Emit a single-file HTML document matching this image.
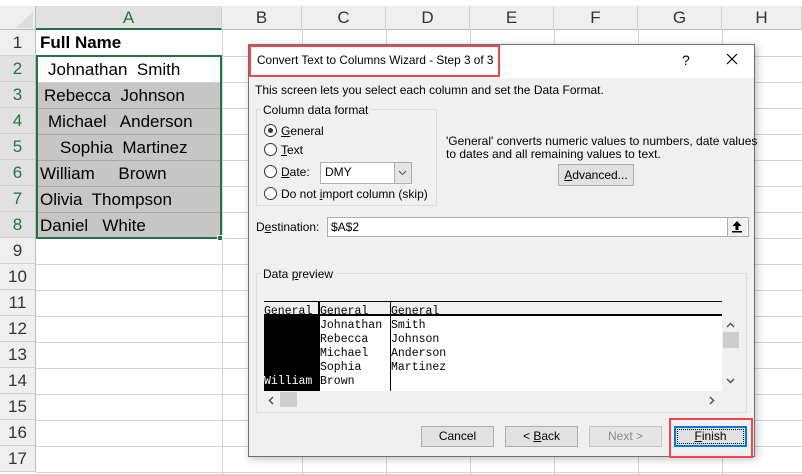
<!DOCTYPE html>
<html><head><style>
*{margin:0;padding:0;box-sizing:border-box}
body{width:802px;height:474px;overflow:hidden;background:#fff;position:relative;font-family:"Liberation Sans",sans-serif}
.a{position:absolute}
.hl{position:absolute;left:36px;width:766px;height:1px;background:#d4d4d4}
.vl{position:absolute;top:30px;width:1px;height:444px;background:#d4d4d4}
.rn{position:absolute;left:0;width:36px;height:26px;background:#efefef;border-bottom:1px solid #d0d0d0;text-align:center;font-size:17px;line-height:26px;color:#333;border-right:1px solid #bcbcbc}
.ch{position:absolute;top:6px;height:24px;background:#efefef;border-right:1px solid #d0d0d0;border-bottom:1px solid #bcbcbc;text-align:center;font-size:17px;line-height:24px;color:#333}
.cell{position:absolute;left:37px;width:184px;height:26px;font-size:17px;line-height:26px;color:#000;white-space:pre}
.g{background:#c6c6c6;border-bottom:1px solid #a8a8a8}
.d{font-size:12px;color:#000;position:absolute;white-space:pre}
.btn{position:absolute;top:426px;width:73px;height:21px;background:#e1e1e1;border:1px solid #adadad;font-size:12px;text-align:center;line-height:19px}
.rad{position:absolute;left:264px;width:13px;height:13px;border:1px solid #333;border-radius:50%;background:#fff}
.m{font-family:"Liberation Mono",monospace;font-size:11.5px;position:absolute;line-height:14px;white-space:pre}
</style></head><body>
<div class="a" style="left:0;top:6px;width:36px;height:24px;background:#efefef;border-right:1px solid #bcbcbc;border-bottom:1px solid #bcbcbc"></div>
<div class="a" style="left:16px;top:12px;width:0;height:0;border-left:17px solid transparent;border-bottom:16px solid #dcdcdc"></div>
<div class="ch" style="left:36px;width:186px;background:#e1e1e1;color:#217346;border-bottom:2px solid #217346">A</div>
<div class="ch" style="left:222px;width:80px">B</div>
<div class="ch" style="left:302px;width:84px">C</div>
<div class="ch" style="left:386px;width:84px">D</div>
<div class="ch" style="left:470px;width:84px">E</div>
<div class="ch" style="left:554px;width:84px">F</div>
<div class="ch" style="left:638px;width:84px">G</div>
<div class="ch" style="left:722px;width:80px">H</div>
<div class="vl" style="left:222px"></div><div class="vl" style="left:302px"></div><div class="vl" style="left:386px"></div><div class="vl" style="left:470px"></div><div class="vl" style="left:554px"></div><div class="vl" style="left:638px"></div><div class="vl" style="left:722px"></div>
<div class="hl" style="top:56px"></div><div class="hl" style="top:82px"></div><div class="hl" style="top:108px"></div><div class="hl" style="top:134px"></div><div class="hl" style="top:160px"></div><div class="hl" style="top:186px"></div><div class="hl" style="top:212px"></div><div class="hl" style="top:238px"></div><div class="hl" style="top:264px"></div><div class="hl" style="top:290px"></div><div class="hl" style="top:316px"></div><div class="hl" style="top:342px"></div><div class="hl" style="top:368px"></div><div class="hl" style="top:394px"></div><div class="hl" style="top:420px"></div><div class="hl" style="top:446px"></div><div class="hl" style="top:472px"></div>
<div class="rn" style="top:30px">1</div>
<div class="rn" style="top:56px;background:#e1e1e1;color:#217346">2</div>
<div class="rn" style="top:82px;background:#e1e1e1;color:#217346">3</div>
<div class="rn" style="top:108px;background:#e1e1e1;color:#217346">4</div>
<div class="rn" style="top:134px;background:#e1e1e1;color:#217346">5</div>
<div class="rn" style="top:160px;background:#e1e1e1;color:#217346">6</div>
<div class="rn" style="top:186px;background:#e1e1e1;color:#217346">7</div>
<div class="rn" style="top:212px;background:#e1e1e1;color:#217346">8</div>
<div class="rn" style="top:238px">9</div><div class="rn" style="top:264px">10</div><div class="rn" style="top:290px">11</div><div class="rn" style="top:316px">12</div><div class="rn" style="top:342px">13</div><div class="rn" style="top:368px">14</div><div class="rn" style="top:394px">15</div><div class="rn" style="top:420px">16</div><div class="rn" style="top:446px">17</div>
<div class="cell" style="top:30px;left:40px;font-weight:bold">Full Name</div>
<div class="cell" style="top:57px;padding-left:11px">Johnathan  Smith</div>
<div class="cell g" style="top:83px;padding-left:7px">Rebecca  Johnson</div>
<div class="cell g" style="top:109px;padding-left:11px">Michael   Anderson</div>
<div class="cell g" style="top:135px;padding-left:23px">Sophia  Martinez</div>
<div class="cell g" style="top:161px;padding-left:3px">William     Brown</div>
<div class="cell g" style="top:187px;padding-left:3px">Olivia  Thompson</div>
<div class="cell g" style="top:213px;padding-left:3px">Daniel   White</div>
<div class="a" style="left:36px;top:55px;width:186px;height:184px;border:2px solid #217346"></div>
<div class="a" style="left:217px;top:235px;width:6px;height:6px;background:#217346;border:1px solid #fff"></div>

<div class="a" style="left:248px;top:44px;width:507px;height:413px;background:#f0f0f0;border:1px solid #6f6f6f;box-shadow:2px 2px 8px rgba(0,0,0,.25)"></div>
<div class="a" style="left:249px;top:45px;width:505px;height:33px;background:#fff"></div>
<div class="a" style="left:249px;top:45px;width:251px;height:32px;border:2px solid #f0454b"></div>
<div class="d" style="left:257px;top:53px;font-size:11.8px">Convert Text to Columns Wizard - Step 3 of 3</div>
<div class="d" style="left:682px;top:52px;font-size:14px">?</div>
<svg class="a" style="left:726px;top:53px" width="12" height="12"><path d="M1 1L11 11M11 1L1 11" stroke="#000" stroke-width="1.2"/></svg>
<div class="d" style="left:255px;top:83px">This screen lets you select each column and set the Data Format.</div>
<div class="a" style="left:256px;top:109px;width:181px;height:97px;border:1px solid #dcdcdc"></div>
<div class="d" style="left:261px;top:103px;background:#f0f0f0;padding:0 2px">Column data format</div>
<div class="rad" style="top:124px"><div class="a" style="left:3px;top:3px;width:5px;height:5px;border-radius:50%;background:#333"></div></div>
<div class="d" style="left:281px;top:124px"><u>G</u>eneral</div>
<div class="rad" style="top:143px"></div><div class="d" style="left:281px;top:143px"><u>T</u>ext</div>
<div class="rad" style="top:165px"></div><div class="d" style="left:281px;top:165px"><u>D</u>ate:</div>
<div class="a" style="left:320px;top:162px;width:92px;height:22px;background:#fff;border:1px solid #adadad"></div>
<div class="d" style="left:325px;top:165px">DMY</div>
<div class="a" style="left:394px;top:163px;width:17px;height:20px;background:#e5e5e5;border-left:1px solid #adadad"></div>
<svg class="a" style="left:398px;top:170px" width="9" height="6"><path d="M1 1L4.5 4.5L8 1" stroke="#555" fill="none"/></svg>
<div class="rad" style="top:187px"></div><div class="d" style="left:281px;top:187px">Do not <u>i</u>mport column (skip)</div>
<div class="d" style="left:446px;top:134px">'General' converts numeric values to numbers, date values</div>
<div class="d" style="left:446px;top:147px">to dates and all remaining values to text.</div>
<div class="a" style="left:558px;top:164px;width:76px;height:22px;background:#e1e1e1;border:1px solid #adadad;font-size:12px;text-align:center;line-height:20px"><u>A</u>dvanced...</div>
<div class="d" style="left:256px;top:220px">D<u>e</u>stination:</div>
<div class="a" style="left:327px;top:217px;width:422px;height:20px;background:#fff;border:1px solid #adadad"></div>
<div class="d" style="left:331px;top:220px">$A$2</div>
<div class="a" style="left:727px;top:218px;width:20px;height:18px;background:#f0f0f0;border-left:1px solid #adadad"></div>
<svg class="a" style="left:731px;top:220px" width="12" height="13"><path d="M6 1L1.5 6H4.5V10H7.5V6H10.5Z" fill="#000"/><rect x="1" y="11" width="10" height="1.5" fill="#000"/></svg>
<div class="a" style="left:256px;top:273px;width:491px;height:140px;border:1px solid #dcdcdc"></div>
<div class="d" style="left:261px;top:267px;background:#f0f0f0;padding:0 2px">Data <u>p</u>review</div>
<div class="a" style="left:264px;top:301px;width:458px;height:90px;background:#fff;border-top:1px solid #000"></div>
<div class="a" style="left:264px;top:302px;width:458px;height:14px;background:#f0f0f0;border-bottom:2px solid #000"></div>
<div class="a" style="left:264px;top:316px;width:54px;height:75px;background:#000"></div>
<div class="a" style="left:318px;top:301px;width:2px;height:90px;background:#000"></div>
<div class="a" style="left:390px;top:301px;width:1px;height:90px;background:#000"></div>
<div class="m" style="left:264px;top:305px;text-decoration:underline">General</div>
<div class="m" style="left:320px;top:305px;text-decoration:underline">General</div>
<div class="m" style="left:391px;top:305px;text-decoration:underline">General</div>
<div class="m" style="left:320px;top:319px">Johnathan<br>Rebecca<br>Michael<br>Sophia<br>Brown</div>
<div class="m" style="left:391px;top:319px">Smith<br>Johnson<br>Anderson<br>Martinez</div>
<div class="m" style="left:264px;top:375px;color:#fff">William</div>
<div class="a" style="left:723px;top:332px;width:16px;height:16px;background:#cdcdcd"></div>
<svg class="a" style="left:726px;top:378px" width="9" height="6"><path d="M1 1L4.5 4.5L8 1" stroke="#555" fill="none" stroke-width="1.5"/></svg>
<svg class="a" style="left:726px;top:322px" width="9" height="6"><path d="M1 5L4.5 1.5L8 5" stroke="#555" fill="none" stroke-width="1.5"/></svg>
<div class="a" style="left:280px;top:392px;width:17px;height:15px;background:#cdcdcd"></div>
<svg class="a" style="left:268px;top:396px" width="6" height="9"><path d="M5 1L1.5 4.5L5 8" stroke="#555" fill="none" stroke-width="1.5"/></svg>
<svg class="a" style="left:709px;top:396px" width="6" height="9"><path d="M1 1L4.5 4.5L1 8" stroke="#555" fill="none" stroke-width="1.5"/></svg>
<div class="btn" style="left:421px">Cancel</div>
<div class="btn" style="left:505px">&lt; <u>B</u>ack</div>
<div class="btn" style="left:589px;color:#8a8a8a;background:#e5e5e5;border-color:#c5c5c5">Next &gt;</div>
<div class="btn" style="left:674px;border:2px solid #0078d7;line-height:17px"><div style="position:absolute;inset:1px;border:1px dotted #000"></div><u>F</u>inish</div>
<div class="a" style="left:669px;top:418px;width:84px;height:40px;border:2px solid #f0454b"></div>
</body></html>
